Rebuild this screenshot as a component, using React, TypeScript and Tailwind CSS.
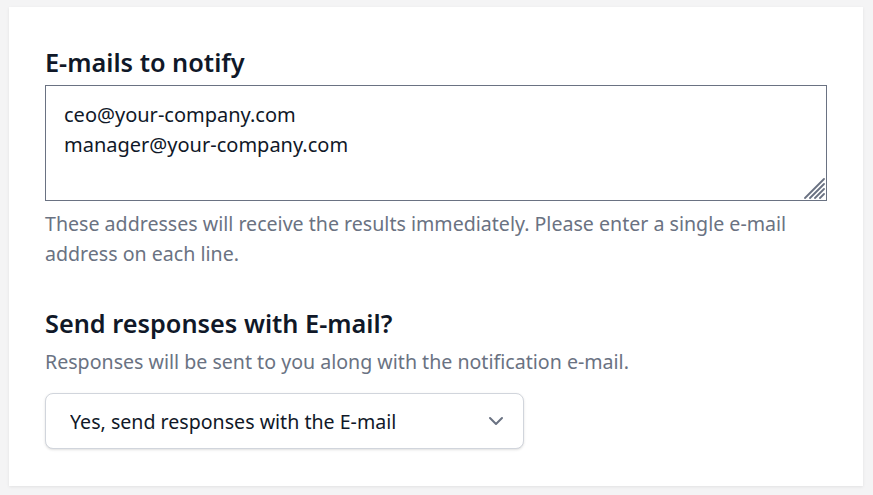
import React, { useState } from 'react'

const ChevronDown = () => (
  <svg
    className="h-5 w-5 text-gray-500"
    viewBox="0 0 20 20"
    fill="none"
    stroke="currentColor"
    strokeWidth="2"
    strokeLinecap="round"
    strokeLinejoin="round"
  >
    <path d="M4 7l6 6 6-6" />
  </svg>
)

// resize grip drawn over the textarea corner
const ResizeGrip = () => (
  <svg
    className="pointer-events-none absolute bottom-[2px] right-[2px] h-[22px] w-[22px] text-gray-500"
    viewBox="0 0 22 22"
    stroke="currentColor"
    strokeWidth="1.8"
    strokeLinecap="round"
  >
    <path d="M2 21L21 2" />
    <path d="M7 21L21 7" />
    <path d="M12 21L21 12" />
    <path d="M17 21L21 17" />
  </svg>
)

const NotificationSettings = () => {
  const [emails, setEmails] = useState(
    'ceo@your-company.com\nmanager@your-company.com',
  )
  const [sendResponses, setSendResponses] = useState('yes')

  return (
    <div
      className="min-h-screen bg-[#f4f4f5] px-[9px] pt-[7px] pb-[10px]"
      style={{ fontFamily: '"Noto Sans", "Open Sans", sans-serif' }}
    >
      <div className="bg-white shadow-[0_1px_3px_rgba(0,0,0,0.08)] px-9 pt-[39px] pb-[37px] w-[854px]">
        <h2 className="text-[25.3px] leading-8 font-semibold text-gray-900">
          E-mails to notify
        </h2>
        <div className="relative mt-[7px]">
          <textarea
            value={emails}
            onChange={(e) => setEmails(e.target.value)}
            className="block w-full h-[116px] border border-gray-500 px-[18px] pt-[14px] pb-[10px] text-[20px] leading-[30px] text-gray-900 outline-none resize-none"
          />
          <ResizeGrip />
        </div>
        <p className="mt-2 text-[19.6px] leading-[30px] text-gray-500">
          These addresses will receive the results immediately. Please enter a
          single e-mail address on each line.
        </p>

        <h2 className="mt-[38px] text-[25.3px] leading-8 font-semibold text-gray-900">
          Send responses with E-mail?
        </h2>
        <p className="mt-2 text-[19.6px] leading-[30px] text-gray-500">
          Responses will be sent to you along with the notification e-mail.
        </p>
        <div className="relative mt-4 w-[479px]">
          <select
            value={sendResponses}
            onChange={(e) => setSendResponses(e.target.value)}
            className="block w-full h-14 appearance-none rounded-lg border border-gray-300 bg-white pl-6 pr-12 pt-px text-[19.6px] text-gray-900 shadow-sm outline-none"
          >
            <option value="yes">Yes, send responses with the E-mail</option>
            <option value="no">No, don't send responses</option>
          </select>
          <div className="pointer-events-none absolute inset-y-0 right-[18px] flex items-center">
            <ChevronDown />
          </div>
        </div>
      </div>
    </div>
  )
}

export default NotificationSettings
